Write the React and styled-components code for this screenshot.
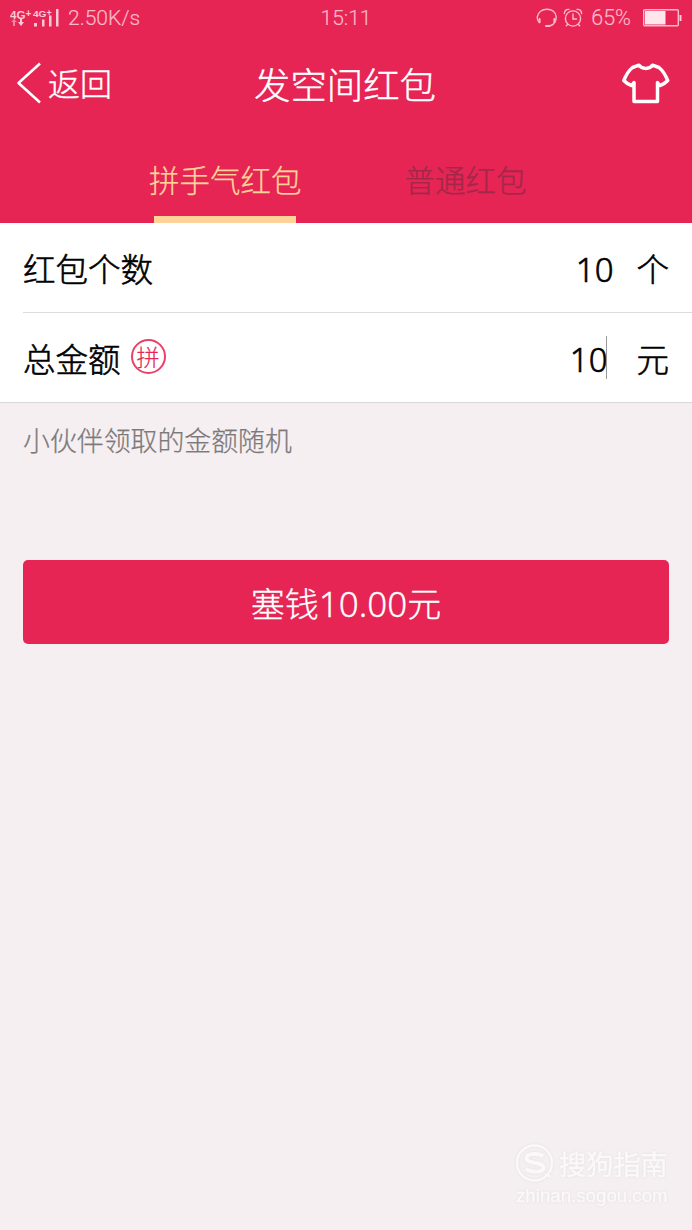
import React from "react";
import styled, { createGlobalStyle } from "styled-components";

const RED = "#e62554";
const CJK = `"Noto Sans CJK SC", sans-serif`;

const GlobalStyle = createGlobalStyle`
  * { box-sizing: border-box; }
  body { margin: 0; background: #f5eff1; font-family: ${CJK}; }
`;

const Screen = styled.div`
  width: 692px;
  height: 1230px;
  display: flex;
  flex-direction: column;
  background: #f5eff1;
  overflow: hidden;
  white-space: nowrap;
  font-weight: 300;
  -webkit-text-stroke-width: 0.4px;
`;

const Header = styled.header`
  height: 223px;
  flex: none;
  background: ${RED};
  color: #fff;
`;

const StatusBar = styled.div`
  height: 37px;
  padding: 0 10px;
  display: grid;
  grid-template-columns: 1fr auto 1fr;
  align-items: center;
  color: #fbb9c9;
  font: 300 20px/35px Roboto, sans-serif;
  -webkit-text-stroke-width: 0.2px;
`;

const StatusGroup = styled.div`
  display: flex;
  align-items: center;
  justify-content: ${(p) => (p.$end ? "flex-end" : "flex-start")};
`;

const StatusText = styled.span`
  display: block;
  font-size: ${(p) => p.$size || 21}px;
  margin: ${(p) => p.$margin || "0"};
`;

const Glyph = styled.svg`
  display: block;
  flex: none;
  margin: ${(p) => p.$margin || "0"};
`;

const NavBar = styled.nav`
  height: 93px;
  padding: 0 22px 2px 16px;
  display: grid;
  grid-template-columns: 1fr auto 1fr;
  align-items: center;
`;

const Back = styled.a`
  display: flex;
  align-items: center;
  font-size: 32px;
  line-height: 44px;
  color: #fff;
`;

const BackLabel = styled.span`
  padding-bottom: 2px;
`;

const Title = styled.h1`
  margin: 0 0 0 4px;
  font-size: 36.4px;
  line-height: 50px;
  font-weight: 300;
`;

const Tabs = styled.div`
  height: 93px;
  display: flex;
  padding-left: 149px;
  gap: 103px;
`;

const Tab = styled.div`
  height: 93px;
  display: flex;
  flex-direction: column;
  align-items: center;
  justify-content: space-between;
  padding-top: 27px;
  font-size: 30.5px;
  line-height: 44px;
  -webkit-text-stroke-width: 0.25px;
  color: ${(p) => (p.$active ? "#fdd39a" : "#a32749")};
`;

const Underline = styled.div`
  width: 142px;
  height: 7px;
  background: #fdd39a;
`;

const Form = styled.section`
  background: #fff;
  border-bottom: 1px solid #dcd8da;
  padding-left: 23px;
`;

const Row = styled.div`
  height: ${(p) => p.$height}px;
  padding-right: 23px;
  display: flex;
  align-items: center;
  color: #000;
  font-size: 32.5px;
  line-height: 46px;
  -webkit-text-stroke-width: 0.6px;
  border-bottom: ${(p) => (p.$divided ? "1px solid #dcdcdc" : "0")};
`;

const Label = styled.span`
  flex: none;
`;

const LuckBadge = styled.span`
  width: 35px;
  height: 35px;
  margin: -2px 0 0 10px;
  border: 2px solid #e8416a;
  border-radius: 50%;
  color: ${RED};
  font-size: 23px;
  line-height: 30px;
  text-align: center;
  -webkit-text-stroke-width: 0.2px;
`;

const Value = styled.span`
  margin-left: auto;
  margin-right: ${(p) => p.$gap}px;
  display: flex;
  align-items: center;
  font-family: "Noto Sans", sans-serif;
  font-size: 33px;
`;

const Digits = styled.span`
  padding-top: 4px;
`;

const Caret = styled.i`
  width: 1px;
  height: 43px;
  margin-left: -1px;
  background: #999;
`;

const Hint = styled.p`
  margin: 17px 23px 0;
  font-size: 26.9px;
  line-height: 40px;
  color: #7c797a;
  -webkit-text-stroke-width: 0.25px;
`;

const Submit = styled.button`
  margin: 100px 23px 0;
  height: 84px;
  flex: none;
  border: 0;
  border-radius: 5px;
  padding: 1px 0 0;
  background: ${RED};
  color: #fff;
  display: flex;
  align-items: center;
  justify-content: center;
  font: 300 34px/50px ${CJK};
  -webkit-text-stroke-width: 0.3px;
`;

const Amount = styled.span`
  padding-top: 2px;
  font-family: "Noto Sans", sans-serif;
  font-size: 35px;
`;

const Watermark = styled.footer`
  margin: auto 22px 22px auto;
  width: 154px;
  color: #fbf8f9;
  filter: drop-shadow(0 0 1px #e2dcde);
`;

const Brand = styled.div`
  display: flex;
  align-items: center;
  gap: 4px;
  font-size: 27.2px;
  line-height: 40px;
  font-weight: 400;
`;

const BrandName = styled.span`
  padding-bottom: 4px;
`;

const Domain = styled.div`
  margin-top: -3px;
  font: 400 18.7px/24px "Liberation Sans", sans-serif;
`;

const SignalIcon = () => (
  <Glyph width="50" height="20" viewBox="0 0 50 20" fill="#fbc9d5" stroke="none">
    <g fontFamily="Liberation Sans, sans-serif" fontWeight="700">
      <text x="0" y="9.500" fontSize="11.500" textLength="15.500" lengthAdjust="spacingAndGlyphs">4G</text>
      <text x="15.500" y="7.500" fontSize="10">+</text>
      <text x="23" y="8" fontSize="9.500" textLength="13.500" lengthAdjust="spacingAndGlyphs">4G</text>
      <text x="36.500" y="6.500" fontSize="9">+</text>
    </g>
    <path d="M4 10l3 3H5v4H3v-4H1z" opacity=".6" />
    <path d="M10 10h2v3h2l-3 4-3-4h2z" />
    <path d="M24 14h3v3.500h-3zM32 10.500h2.500v7H32zM39 6.500h2.500v11H39zM46 0h2.500v17.500H46z" />
  </Glyph>
);

const HeadsetIcon = () => (
  <Glyph width="22" height="20" viewBox="0 0 22 20" $margin="-1px 0 0" fill="none" stroke="#fbb9c9" strokeWidth="1.4" strokeLinecap="round">
    <path d="M3.300 14.500C1.500 12.500 1 10.700 1.300 8.800 2 4.300 6 1.200 11 1.200s9 3.100 9.200 7.600c.2 1.900-.2 3.700-1.700 5.700-1 2-3 3.200-5 3.300" />
    <path d="M3.600 11v3.300M18.400 11v3.300M10 18h3.500" strokeWidth="2" />
  </Glyph>
);

const AlarmIcon = () => (
  <Glyph width="20" height="20" viewBox="0 0 20 20" $margin="-2px 0 0 5px" fill="none" stroke="#fbb9c9" strokeWidth="1.4" strokeLinecap="round">
    <circle cx="10" cy="10.5" r="7.6" />
    <path d="M10 6v5h3.5M1.400 5.500C1.200 3 3.300 1 6 1.400M18.600 5.500C18.800 3 16.700 1 14 1.400M4.800 16.200l-1.500 1.600M15.200 16.200l1.500 1.600" />
  </Glyph>
);

const BatteryIcon = () => (
  <Glyph width="39" height="18" viewBox="0 0 39 18" $margin="-2px 0 0 11px">
    <rect x=".7" y=".7" width="34.6" height="16" rx="1" fill="none" stroke="#fbb9c9" strokeWidth="1.4" />
    <path d="M2 2H22.500V15.500H2Z" fill="#fee6ec" />
    <path d="M36.500 6h2v6h-2z" fill="#fbc9d5" />
  </Glyph>
);

const ChevronIcon = () => (
  <Glyph width="26" height="44" viewBox="0 0 26 44" $margin="0 6px 0 0" fill="none" stroke="#fff" strokeWidth="2.600">
    <path d="M24 2.500L2.500 22L24 41.500" strokeLinejoin="round" />
  </Glyph>
);

const ShirtIcon = () => (
  <Glyph width="48" height="42" viewBox="0 0 48 42" $margin="2px 0 0" fill="none" stroke="#fff" strokeWidth="3.500" strokeLinejoin="round">
    <path d="M17 2.200L10.500 4.500Q5.500 8.500 1.800 17.500Q5 21 9.500 22.500L12 19.500V38.500H35.500V19.500L38 22.500Q42.500 21 45.700 17.500Q42 8.500 37 4.500L30.500 2.200C28 6.500 19.500 6.500 17 2.200Z" />
  </Glyph>
);

const SogouMark = () => (
  <Glyph width="39" height="40" viewBox="0 0 39 40" $margin="-5px 0 0" fill="none" stroke="#fbf8f9">
    <circle cx="18.500" cy="20" r="17.500" strokeWidth="2.400" />
    <path d="M27.500 13C21.500 10 10.500 10 10.500 15.500C10.500 21 27.500 18.500 27.500 24.500C27.500 30 15.500 29.500 9.500 26" strokeWidth="4" />
    <path d="M29 31l6 3" strokeWidth="2" />
  </Glyph>
);

export default function App() {
  return (
    <Screen>
      <GlobalStyle />
      <Header>
        <StatusBar>
          <StatusGroup>
            <SignalIcon />
            <StatusText $size={21} $margin="0 0 0 8px">2.50K/s</StatusText>
          </StatusGroup>
          <StatusText $size={21}>15:11</StatusText>
          <StatusGroup $end>
            <HeadsetIcon />
            <AlarmIcon />
            <StatusText $size={21.5} $margin="-2px 1px 0 8px">65%</StatusText>
            <BatteryIcon />
          </StatusGroup>
        </StatusBar>
        <NavBar>
          <Back>
            <ChevronIcon />
            <BackLabel>返回</BackLabel>
          </Back>
          <Title>发空间红包</Title>
          <StatusGroup $end>
            <ShirtIcon />
          </StatusGroup>
        </NavBar>
        <Tabs>
          <Tab $active>
            拼手气红包
            <Underline />
          </Tab>
          <Tab>普通红包</Tab>
        </Tabs>
      </Header>
      <Form>
        <Row $height={90} $divided>
          <Label>红包个数</Label>
          <Value $gap={23}>
            <Digits>10</Digits>
          </Value>
          <Label>个</Label>
        </Row>
        <Row $height={89}>
          <Label>总金额</Label>
          <LuckBadge>拼</LuckBadge>
          <Value $gap={29}>
            <Digits>10</Digits>
            <Caret />
          </Value>
          <Label>元</Label>
        </Row>
      </Form>
      <Hint>小伙伴领取的金额随机</Hint>
      <Submit>
        塞钱<Amount>10.00</Amount>元
      </Submit>
      <Watermark>
        <Brand>
          <SogouMark />
          <BrandName>搜狗指南</BrandName>
        </Brand>
        <Domain>zhinan.sogou.com</Domain>
      </Watermark>
    </Screen>
  );
}
